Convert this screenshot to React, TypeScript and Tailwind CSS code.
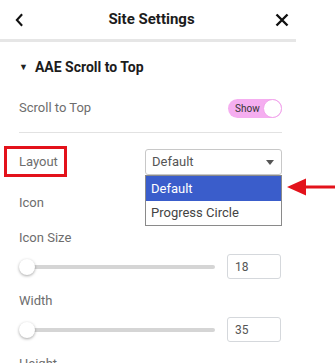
import { useState } from "react";

function Slider({ value }: { value: string }) {
  return (
    <div className="mt-[8px] flex h-[25px] items-center justify-between">
      <div className="relative ml-[1px] flex h-[16px] w-[195px] items-center">
        <div className="h-[4px] w-full rounded-full bg-[#d5d5d5]" />
        <div className="absolute left-[-1px] top-0 h-[16px] w-[16px] rounded-full bg-white shadow-[0_1px_3px_rgba(0,0,0,0.35)]" />
      </div>
      <div className="mr-[1px] flex h-[25px] w-[54px] items-center rounded-[3px] border border-[#d5d8dc] px-[7px] text-[12px] text-[#555]">
        {value}
      </div>
    </div>
  );
}

export default function App() {
  const [show] = useState(true);
  return (
    <div className="relative h-[363px] w-[335px] overflow-hidden bg-white font-['Roboto',sans-serif]">
      <div className="w-[296px]">
        <div className="flex h-[39px] items-center justify-between pl-[15px] pr-[7px]">
          <svg viewBox="0 0 10 16" className="h-[14px] w-[9px]" aria-hidden="true">
            <path d="M8 1.5L2 8l6 6.5" fill="none" stroke="#111" strokeWidth="2.4" />
          </svg>
          <span className="ml-[4px] text-[15px] font-bold text-[#1c1c1c]">Site Settings</span>
          <svg viewBox="0 0 14 14" className="h-[14px] w-[14px]" aria-hidden="true">
            <path d="M1.5 1.5l11 11M12.5 1.5l-11 11" fill="none" stroke="#111" strokeWidth="2.4" />
          </svg>
        </div>
        <div className="h-[3px] bg-[#e6e6e6]" />

        <div className="pl-[19px] pr-[14px]">
          <div className="mt-[16px] flex h-[18px] items-center">
            <span className="mr-[7px] text-[9px] leading-none text-[#222]">▼</span>
            <span className="text-[14px] font-bold text-[#1c1c1c]">AAE Scroll to Top</span>
          </div>

          <div className="mt-[22px] flex h-[20px] items-center justify-between">
            <span className="text-[13px] text-[#6d6d6d]">Scroll to Top</span>
            <div className="relative flex h-[19px] w-[54px] items-center rounded-full bg-[#f5aef0] pl-[7px]">
              <span className="text-[10px] text-[#333]">{show ? "Show" : "Hide"}</span>
              <div className="absolute right-0 top-0 h-[19px] w-[19px] rounded-full border border-[#f2a4ec] bg-white" />
            </div>
          </div>

          <div className="mt-[14px] h-px bg-[#e2e2e2]" />

          <div className="mt-[16px] flex h-[26px] items-center justify-between">
            <span className="text-[13px] text-[#6d6d6d]">Layout</span>
            <div className="relative flex h-[26px] w-[137px] items-center justify-between rounded-[3px] border border-[#c8c8c8] pl-[6px] pr-[7px] text-[13px] text-[#555]">
              Default
              <svg viewBox="0 0 8 5" className="h-[5px] w-[8px]" aria-hidden="true">
                <path d="M0 0H8L4 5Z" fill="#555" />
              </svg>
              <div className="absolute left-[-1px] top-[25px] w-[137px] border border-[#8a8a8a] bg-white text-[13px]">
                <div className="flex h-[25px] items-center bg-[#3a5dcb] px-[5px] text-white">Default</div>
                <div className="flex h-[24px] items-center px-[5px] text-[#444]">Progress Circle</div>
              </div>
            </div>
          </div>

          <div className="mt-[20px] h-[16px] text-[13px] leading-[16px] text-[#6d6d6d]">Icon</div>

          <div className="mt-[19px] h-[16px] text-[13px] leading-[16px] text-[#6d6d6d]">Icon Size</div>
          <Slider value="18" />

          <div className="mt-[14px] h-[16px] text-[13px] leading-[16px] text-[#6d6d6d]">Width</div>
          <Slider value="35" />

          <div className="mt-[14px] h-[16px] text-[13px] leading-[16px] text-[#6d6d6d]">Height</div>
        </div>
      </div>

      {/* annotations */}
      <div className="absolute left-[4px] top-[146px] h-[31px] w-[63px] border-[3px] border-[#e3121b]" />
      <svg viewBox="0 0 48 20" className="absolute left-[287px] top-[177px] h-[20px] w-[48px]" aria-hidden="true">
        <path d="M0 10L19 1.5V8.5H48V11.5H19V18.5Z" fill="#e3121b" />
      </svg>
    </div>
  );
}
